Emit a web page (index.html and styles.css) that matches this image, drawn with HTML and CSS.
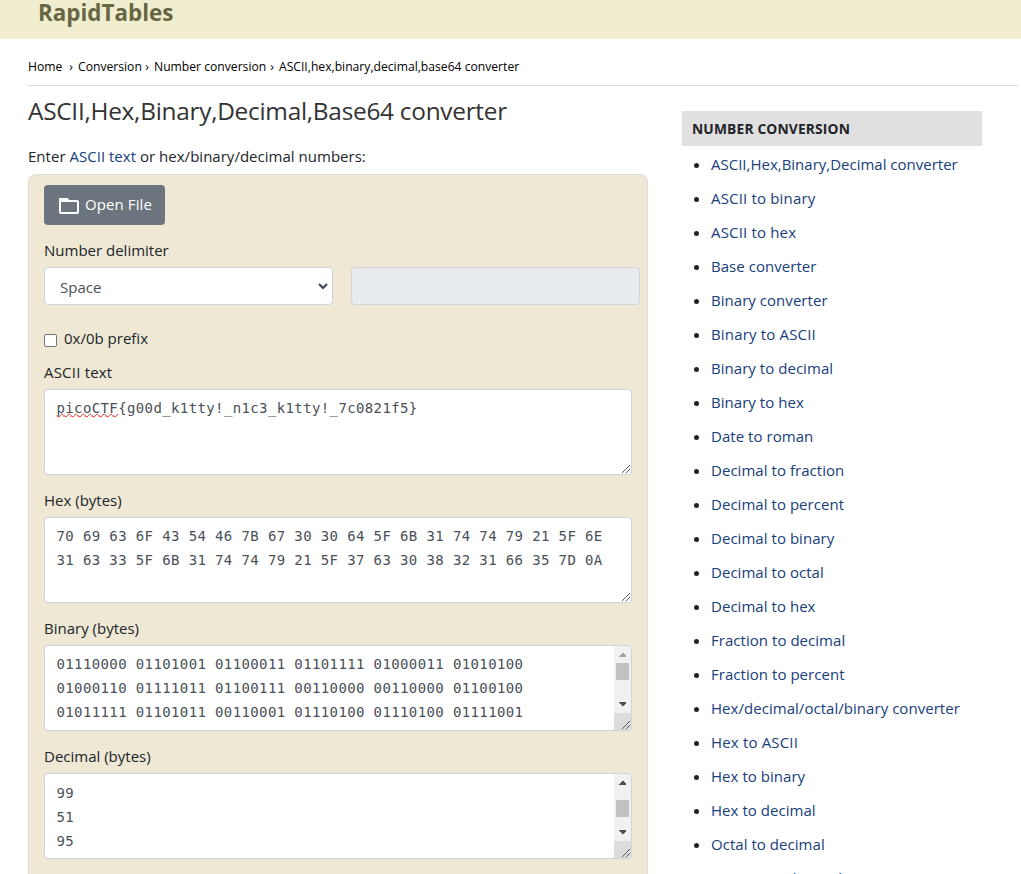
FILE: index.html
```html
<!DOCTYPE html>
<html lang="en">
<head>
<meta charset="utf-8">
<title>ASCII,Hex,Binary,Decimal,Base64 converter</title>
<link rel="stylesheet" href="styles.css">
</head>
<body>
<header class="site-header"><a class="brand">RapidTables</a></header>
<div class="page">
  <nav class="crumbs"><span class="home">Home</span><span class="sep">›</span><span class="conv">Conversion</span><span class="sep">›</span><span class="numc">Number conversion</span><span class="sep">›</span><span class="last">ASCII,hex,binary,decimal,base64 converter</span></nav>
  <div class="columns">
    <main class="main">
      <h1>ASCII,Hex,Binary,Decimal,Base64 converter</h1>
      <p class="intro">Enter <a>ASCII text</a> or hex/binary/decimal numbers:</p>
      <form class="panel">
        <button type="button" class="open">
          <svg width="20" height="16" viewBox="0 0 20 16"><path d="M1 1H8L10 3H18Q19 3 19 4V14Q19 15 18 15H2Q1 15 1 14Z" fill="none" stroke="#fff" stroke-width="2"/><path d="M1 1H8L10 4H1Z" fill="#fff"/></svg>
          <span>Open File</span>
        </button>
        <div class="label delim">Number delimiter</div>
        <div class="row">
          <div class="select"><span>Space</span><svg width="10" height="7" viewBox="0 0 10 7"><path d="M1 1L5 5L9 1" fill="none" stroke="#3c4249" stroke-width="2"/></svg></div>
          <div class="select disabled"></div>
        </div>
        <div class="check"><i class="box"></i><span>0x/0b prefix</span></div>
        <div class="label l-ascii">ASCII text</div>
        <div class="area"><pre><span class="spell">picoCTF</span>{g00d_k1tty!_n1c3_k1tty!_7c0821f5}</pre><svg class="grip" width="10" height="10" viewBox="0 0 10 10"><path d="M1 9L9 1M5 9L9 5"/></svg></div>
        <div class="label l-hex">Hex (bytes)</div>
        <div class="area"><pre>70 69 63 6F 43 54 46 7B 67 30 30 64 5F 6B 31 74 74 79 21 5F 6E
31 63 33 5F 6B 31 74 74 79 21 5F 37 63 30 38 32 31 66 35 7D 0A</pre><svg class="grip" width="10" height="10" viewBox="0 0 10 10"><path d="M1 9L9 1M5 9L9 5"/></svg></div>
        <div class="label l-bin">Binary (bytes)</div>
        <div class="area"><pre>01110000 01101001 01100011 01101111 01000011 01010100
01000110 01111011 01100111 00110000 00110000 01100100
01011111 01101011 00110001 01110100 01110100 01111001</pre>
          <svg class="bar" width="17" height="84" viewBox="0 0 17 84" shape-rendering="crispEdges"><path d="M0 0H17V67H0Z" fill="#f1f1f1"/><path d="M0 67H17V84H0Z" fill="#dcdcdc"/><path d="M5 11H12V10L9 7H8L5 10Z" fill="#a3a3a3"/><path d="M2 17H15V34H2Z" fill="#c1c1c1"/><path d="M5 56H12V57L9 60H8L5 57Z" fill="#505050"/></svg>
          <svg class="grip" width="10" height="10" viewBox="0 0 10 10"><path d="M1 9L9 1M5 9L9 5"/></svg></div>
        <div class="label l-dec">Decimal (bytes)</div>
        <div class="area dec"><pre>99
51
95</pre>
          <svg class="bar" width="17" height="84" viewBox="0 0 17 84" shape-rendering="crispEdges"><path d="M0 0H17V67H0Z" fill="#f1f1f1"/><path d="M0 67H17V84H0Z" fill="#dcdcdc"/><path d="M5 11H12V10L9 7H8L5 10Z" fill="#505050"/><path d="M2 26H15V43H2Z" fill="#c1c1c1"/><path d="M5 56H12V57L9 60H8L5 57Z" fill="#505050"/></svg>
          <svg class="grip" width="10" height="10" viewBox="0 0 10 10"><path d="M1 9L9 1M5 9L9 5"/></svg></div>
      </form>
    </main>
    <aside class="side">
      <h2>NUMBER CONVERSION</h2>
      <ul>
        <li><a>ASCII,Hex,Binary,Decimal converter</a></li>
        <li class="wide"><a>ASCII to binary</a></li>
        <li class="wide"><a>ASCII to hex</a></li>
        <li><a>Base converter</a></li>
        <li><a>Binary converter</a></li>
        <li class="wide"><a>Binary to ASCII</a></li>
        <li><a>Binary to decimal</a></li>
        <li><a>Binary to hex</a></li>
        <li><a>Date to roman</a></li>
        <li><a>Decimal to fraction</a></li>
        <li><a>Decimal to percent</a></li>
        <li><a>Decimal to binary</a></li>
        <li><a>Decimal to octal</a></li>
        <li><a>Decimal to hex</a></li>
        <li><a>Fraction to decimal</a></li>
        <li><a>Fraction to percent</a></li>
        <li><a>Hex/decimal/octal/binary converter</a></li>
        <li class="wide"><a>Hex to ASCII</a></li>
        <li><a>Hex to binary</a></li>
        <li><a>Hex to decimal</a></li>
        <li><a>Octal to decimal</a></li>
        <li><a>Percent to decimal</a></li>
      </ul>
    </aside>
  </div>
</div>
</body>
</html>
```
FILE: styles.css
```css
* { box-sizing: border-box; }
html, body { height: 874px; overflow: hidden; }
body { margin: 0; background: #fff; color: #212529; font: 15px/24px "Open Sans", "Noto Sans", sans-serif; }
a { color: #17407c; }
.site-header { height: 39px; background: #f0eecf; padding-left: 38px; }
.brand { display: block; color: #666644; font-size: 22.4px; font-weight: 700; line-height: 26px; }
.page { padding-left: 28px; }
.crumbs { display: flex; width: 990px; height: 47px; padding-top: 16px; border-bottom: 1px solid #dcdcdc; color: #000; font-size: 12.15px; white-space: nowrap; }
.sep { width: 8px; margin-right: 3px; text-align: center; }
.home { width: 39px; }
.conv { width: 65px; }
.numc { width: 114px; }
.columns { display: flex; gap: 34px; }
.main { width: 620px; }
h1 { margin: 7px 0 0; font-size: 24.4px; font-weight: 400; line-height: 36px; color: #333; letter-spacing: -0.27px; white-space: nowrap; }
.intro { margin: 15px 0 6px; letter-spacing: 0.02px; }
.panel { height: 740px; padding: 10px 15px; background: #eee8d5; border: 1px solid #dcdcdc; border-radius: 8px; }
.open { display: flex; align-items: center; gap: 6px; width: 121px; height: 40px; padding: 0 0 0 15px; border: 0; border-radius: 4px; background: #6c757d; color: #fff; font: inherit; letter-spacing: 0.1px; white-space: nowrap; }
.open svg { margin-top: 2px; flex: none; }
.open span { padding-bottom: 2px; }
.label { height: 24px; line-height: 22px; white-space: nowrap; }
.delim { margin-top: 14px; }
.row { display: flex; gap: 18px; width: 596px; margin-top: 4px; }
.select { display: flex; align-items: center; justify-content: space-between; width: 289px; height: 38px; padding: 2px 4px 0 15px; background: #fff; border: 1px solid #ced4da; border-radius: 4px; color: #495057; }
.select svg { margin-top: -2px; }
.disabled { background: #e9ecef; }
.check { display: flex; align-items: center; gap: 7px; height: 24px; margin-top: 22px; }
.check span { padding-bottom: 2px; }
.box { width: 13px; height: 13px; margin-top: 3px; border: 1px solid #767676; border-radius: 2px; background: #fff; }
.l-ascii { margin-top: 10px; letter-spacing: 0.2px; }
.l-hex, .l-bin, .l-dec { margin-top: 14px; }
.area { position: relative; width: 588px; height: 86px; margin-top: 4px; padding: 6px 12px; background: #fff; border: 1px solid #ced4da; border-radius: 4px; overflow: hidden; }
.area pre { margin: 0 0 0 -0.5px; color: #495057; font: 14px/24px "DejaVu Sans Mono", monospace; letter-spacing: 0.38px; }
.dec { padding-top: 7px; }
.spell { text-decoration: underline wavy #e02020 1px; text-decoration-skip-ink: none; text-underline-offset: 0; }
.bar { position: absolute; right: 0; top: 0; }
.grip { position: absolute; right: 0; bottom: 0; }
.grip path { fill: none; stroke: #555; stroke-width: 1; }
.side { width: 300px; padding-top: 25px; }
.side h2 { margin: 0; height: 35px; padding-left: 10px; background: #e0e0e0; font-size: 13.8px; font-weight: 700; letter-spacing: 0.15px; line-height: 36px; }
.side ul { margin: 1px 0 0; padding: 0 0 0 29px; letter-spacing: 0.04px; }
.side li { height: 34px; line-height: 34px; white-space: nowrap; }
.side li:first-child { letter-spacing: 0; }
.side .wide { letter-spacing: 0.17px; }
```
